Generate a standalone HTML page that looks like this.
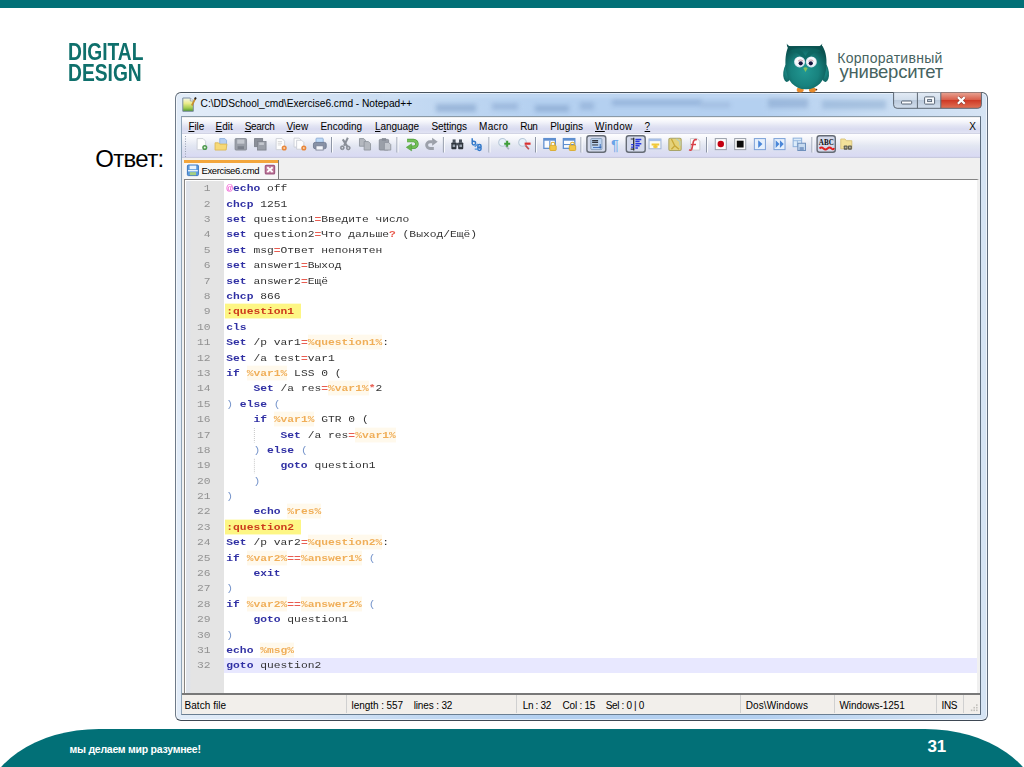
<!DOCTYPE html>
<html lang="ru">
<head>
<meta charset="utf-8">
<title>Ответ</title>
<style>
html,body{margin:0;padding:0;}
body{width:1024px;height:767px;position:relative;overflow:hidden;background:#fff;font-family:"Liberation Sans",sans-serif;}
.abs{position:absolute;}
#topbar{left:0;top:0;width:1024px;height:7.8px;background:#027077;}
#footer{left:-16px;top:728.5px;width:1056px;height:90px;background:#027077;border-radius:115px 115px 0 0 / 80px 80px 0 0;}
#slogan{left:69.5px;top:742.4px;color:#fff;font-weight:bold;font-size:10.5px;line-height:14px;white-space:nowrap;letter-spacing:-.25px;}
#pageno{left:927.6px;top:737px;color:#fff;font-weight:bold;font-size:17px;line-height:20px;letter-spacing:-.2px;}
#answer{left:95.3px;top:145.8px;font-size:24px;line-height:26px;color:#000;letter-spacing:-.7px;}
#dd,#dd2{color:#0f706c;font-weight:bold;font-size:24.2px;line-height:22px;white-space:nowrap;transform-origin:0 0;}
#corp1{left:837.2px;top:48.6px;font-size:14px;line-height:18px;color:#46635f;white-space:nowrap;letter-spacing:.3px;}
#corp2{left:839.6px;top:59.8px;font-size:18.5px;line-height:24px;color:#46635f;white-space:nowrap;letter-spacing:-.24px;}
/* window */
#win{left:175.2px;top:91.7px;width:812.8px;height:629.1px;box-sizing:border-box;border:1.4px solid #6e7a88;border-top-color:#4a545e;border-bottom-color:#3e4854;border-right-color:#5e6a7a;border-radius:6px;background:linear-gradient(90deg,#e2ecf8 0,#dbe7f6 14%,#c3d9f2 30%,#b4d0f0 45%,#b4d0f0 72%,#c6dbf2 86%,#d6e4f4 100%);box-shadow:inset 0 0 0 1px rgba(255,255,255,.6);}
#title{left:200.6px;top:97.4px;font-size:10.2px;line-height:14px;color:#000;white-space:nowrap;letter-spacing:-.035px;}
#client{left:181px;top:116.2px;width:800px;height:598.6px;background:#f0f0f0;box-sizing:border-box;border:1.3px solid #8fa4b8;border-top-color:#8a9aa8;border-right-color:#5c6c7e;border-bottom-color:#6a7e92;}
#menubar{left:182.3px;top:117.5px;width:797.4px;height:16px;background:linear-gradient(#ffffff 0,#f3f4fa 25%,#e2e4f3 50%,#d9dbf0 70%,#e1e3f3 92%,#c9cbdc 100%);}
.mi{position:absolute;top:119.5px;font-size:10px;line-height:14px;color:#000;white-space:nowrap;}
.mi u{text-decoration:underline;}
#toolbar{left:182.3px;top:133.5px;width:797.4px;height:24.8px;background:linear-gradient(#fefeff 0,#f4f5fa 22%,#e3e7f2 48%,#dcdff1 70%,#d9daf3 93%,#c2c4d6 100%);}
#tabbar{left:182.3px;top:158.3px;width:797.4px;height:21.7px;background:#f0f0f0;}
#tab{left:184px;top:160px;width:94.5px;height:19.3px;background:#f7f7f7;border-right:1.3px solid #7a7a7a;box-sizing:border-box;}
#tabtop{left:184px;top:159.8px;width:94px;height:3.5px;background:#f3a63c;}
#tabtxt{left:201.5px;top:164.2px;font-size:9.5px;line-height:13px;color:#000;white-space:nowrap;letter-spacing:-0.36px;}
#editor{left:184.2px;top:179.2px;width:795px;height:514px;background:#fff;border:1.5px solid #858585;border-left:1.8px solid #878482;border-right:2.5px solid #f0f0f0;border-bottom:0;box-sizing:border-box;}
#margin{left:186px;top:180.7px;width:38px;height:512px;background:linear-gradient(90deg,#dfe3ea 0,#dfe3ea 3.5px,#e4e4e4 5px);}
#curline{left:224px;top:658.3px;width:752.7px;height:14.5px;background:#e8e8ff;}
.ln{position:absolute;left:185px;width:25.5px;text-align:right;font-family:"Liberation Mono",monospace;font-size:11.3px;line-height:15.39px;height:15.39px;color:#929292;transform:scaleY(.87);transform-origin:0 10.7px;}
.cl{position:absolute;left:226.3px;font-family:"Liberation Mono",monospace;font-size:11.3px;line-height:15.39px;height:15.39px;color:#333;white-space:pre;transform:scaleY(.87);transform-origin:0 10.7px;}
.k{color:#3030a4;font-weight:bold;}
.v{color:#f0ae58;font-weight:bold;background:#fff9ec;padding:2.6px 0 1.9px;}
.o{color:#e85c50;font-weight:bold;}
.h{color:#f060d4;font-weight:bold;}
.p{color:#7896cc;}
.lb{color:#cc3a1c;font-weight:bold;background:#fdf684;padding:2.6px 0 1.9px 1.4px;margin-left:-1.4px;}
#status{left:182.3px;top:692.6px;width:797.4px;height:21px;background:#f2efeb;border-top:2px solid #787878;box-sizing:border-box;}
.st{position:absolute;top:698.5px;font-size:10px;line-height:14px;color:#000;white-space:nowrap;}
.sd{position:absolute;top:695px;width:1px;height:18px;background:#d0d0d0;}
</style>
</head>
<body>
<div id="topbar" class="abs"></div>
<div id="dd" class="abs" style="left:68px;top:40.9px;transform:scaleX(.795)">DIGITAL</div>
<div id="dd2" class="abs" style="left:68px;top:61.5px;transform:scaleX(.795)">DESIGN</div>
<div id="corp1" class="abs">Корпоративный</div>
<div id="corp2" class="abs">университет</div>
<div id="answer" class="abs">Ответ:</div>

<div id="win" class="abs"></div>
<div id="title" class="abs">C:\DDSchool_cmd\Exercise6.cmd - Notepad++</div>
<div id="client" class="abs"></div>
<div id="menubar" class="abs"></div>
<div id="toolbar" class="abs"></div>
<div id="tabbar" class="abs"></div>
<div id="tab" class="abs"></div>
<div id="tabtop" class="abs"></div>
<div id="tabtxt" class="abs">Exercise6.cmd</div>
<div id="editor" class="abs"></div>
<div id="margin" class="abs"></div>
<div id="curline" class="abs"></div>
<div class="ln" style="top:181.30px">1</div><div class="cl" style="top:181.30px"><span class="h">@</span><span class="k">echo</span> off</div>
<div class="ln" style="top:196.69px">2</div><div class="cl" style="top:196.69px"><span class="k">chcp</span> 1251</div>
<div class="ln" style="top:212.08px">3</div><div class="cl" style="top:212.08px"><span class="k">set</span> question1<span class="o">=</span>Введите число</div>
<div class="ln" style="top:227.47px">4</div><div class="cl" style="top:227.47px"><span class="k">set</span> question2<span class="o">=</span>Что дальше<span class="o">?</span> (Выход/Ещё)</div>
<div class="ln" style="top:242.86px">5</div><div class="cl" style="top:242.86px"><span class="k">set</span> msg<span class="o">=</span>Ответ непонятен</div>
<div class="ln" style="top:258.25px">6</div><div class="cl" style="top:258.25px"><span class="k">set</span> answer1<span class="o">=</span>Выход</div>
<div class="ln" style="top:273.64px">7</div><div class="cl" style="top:273.64px"><span class="k">set</span> answer2<span class="o">=</span>Ещё</div>
<div class="ln" style="top:289.03px">8</div><div class="cl" style="top:289.03px"><span class="k">chcp</span> 866</div>
<div class="ln" style="top:304.42px">9</div><div class="cl" style="top:304.42px"><span class="lb">:question1 </span></div>
<div class="ln" style="top:319.81px">10</div><div class="cl" style="top:319.81px"><span class="k">cls</span></div>
<div class="ln" style="top:335.20px">11</div><div class="cl" style="top:335.20px"><span class="k">Set</span> /p var1<span class="o">=</span><span class="v">%question1%</span>:</div>
<div class="ln" style="top:350.59px">12</div><div class="cl" style="top:350.59px"><span class="k">Set</span> /a test<span class="o">=</span>var1</div>
<div class="ln" style="top:365.98px">13</div><div class="cl" style="top:365.98px"><span class="k">if</span> <span class="v">%var1%</span> LSS 0 (</div>
<div class="ln" style="top:381.37px">14</div><div class="cl" style="top:381.37px">    <span class="k">Set</span> /a res<span class="o">=</span><span class="v">%var1%</span><span class="o">*</span>2</div>
<div class="ln" style="top:396.76px">15</div><div class="cl" style="top:396.76px"><span class="p">)</span> <span class="k">else</span> <span class="p">(</span></div>
<div class="ln" style="top:412.15px">16</div><div class="cl" style="top:412.15px">    <span class="k">if</span> <span class="v">%var1%</span> GTR 0 (</div>
<div class="ln" style="top:427.54px">17</div><div class="cl" style="top:427.54px">        <span class="k">Set</span> /a res<span class="o">=</span><span class="v">%var1%</span></div>
<div class="ln" style="top:442.93px">18</div><div class="cl" style="top:442.93px">    <span class="p">)</span> <span class="k">else</span> <span class="p">(</span></div>
<div class="ln" style="top:458.32px">19</div><div class="cl" style="top:458.32px">        <span class="k">goto</span> question1</div>
<div class="ln" style="top:473.71px">20</div><div class="cl" style="top:473.71px">    <span class="p">)</span></div>
<div class="ln" style="top:489.10px">21</div><div class="cl" style="top:489.10px"><span class="p">)</span></div>
<div class="ln" style="top:504.49px">22</div><div class="cl" style="top:504.49px">    <span class="k">echo</span> <span class="v">%res%</span></div>
<div class="ln" style="top:519.88px">23</div><div class="cl" style="top:519.88px"><span class="lb">:question2 </span></div>
<div class="ln" style="top:535.27px">24</div><div class="cl" style="top:535.27px"><span class="k">Set</span> /p var2<span class="o">=</span><span class="v">%question2%</span>:</div>
<div class="ln" style="top:550.66px">25</div><div class="cl" style="top:550.66px"><span class="k">if</span> <span class="v">%var2%</span><span class="o">==</span><span class="v">%answer1%</span> <span class="p">(</span></div>
<div class="ln" style="top:566.05px">26</div><div class="cl" style="top:566.05px">    <span class="k">exit</span></div>
<div class="ln" style="top:581.44px">27</div><div class="cl" style="top:581.44px"><span class="p">)</span></div>
<div class="ln" style="top:596.83px">28</div><div class="cl" style="top:596.83px"><span class="k">if</span> <span class="v">%var2%</span><span class="o">==</span><span class="v">%answer2%</span> <span class="p">(</span></div>
<div class="ln" style="top:612.22px">29</div><div class="cl" style="top:612.22px">    <span class="k">goto</span> question1</div>
<div class="ln" style="top:627.61px">30</div><div class="cl" style="top:627.61px"><span class="p">)</span></div>
<div class="ln" style="top:643.00px">31</div><div class="cl" style="top:643.00px"><span class="k">echo</span> <span class="v">%msg%</span></div>
<div class="ln" style="top:658.39px">32</div><div class="cl" style="top:658.39px"><span class="k">goto</span> question2</div>
<div class="mi" style="left:188.4px;letter-spacing:-0.106px"><u>F</u>ile</div>
<div class="mi" style="left:215.5px;letter-spacing:0.016px"><u>E</u>dit</div>
<div class="mi" style="left:244.7px;letter-spacing:-0.331px"><u>S</u>earch</div>
<div class="mi" style="left:286.6px;letter-spacing:0.025px"><u>V</u>iew</div>
<div class="mi" style="left:320.4px;letter-spacing:0.012px">Encoding</div>
<div class="mi" style="left:375.0px;letter-spacing:-0.062px"><u>L</u>anguage</div>
<div class="mi" style="left:431.4px;letter-spacing:-0.068px">Se<u>t</u>tings</div>
<div class="mi" style="left:479.1px;letter-spacing:0.221px">Macro</div>
<div class="mi" style="left:520.3px;letter-spacing:-0.386px">Run</div>
<div class="mi" style="left:550.2px;letter-spacing:0.000px">Plugins</div>
<div class="mi" style="left:595.0px;letter-spacing:0.354px"><u>W</u>indow</div>
<div class="mi" style="left:644.6px;letter-spacing:0.000px"><u>?</u></div>
<div class="mi" style="left:969.2px;letter-spacing:-0.200px">X</div>
<div id="status" class="abs"></div>
<div class="st" style="left:184.5px;letter-spacing:0.056px">Batch file</div>
<div class="st" style="left:351.6px;letter-spacing:-0.064px">length : 557</div>
<div class="st" style="left:413.7px;letter-spacing:-0.143px">lines : 32</div>
<div class="st" style="left:522.7px;letter-spacing:-0.328px">Ln : 32</div>
<div class="st" style="left:562.6px;letter-spacing:-0.246px">Col : 15</div>
<div class="st" style="left:605.8px;letter-spacing:-0.353px">Sel : 0 | 0</div>
<div class="st" style="left:745.7px;letter-spacing:0.114px">Dos\Windows</div>
<div class="st" style="left:839.4px;letter-spacing:-0.063px">Windows-1251</div>
<div class="st" style="left:941.4px;letter-spacing:-0.291px">INS</div>
<div class="sd" style="left:346px"></div>
<div class="sd" style="left:516px"></div>
<div class="sd" style="left:740px"></div>
<div class="sd" style="left:834px"></div>
<div class="sd" style="left:936px"></div>
<div class="sd" style="left:963px"></div>
<svg class="abs" style="left:0;top:0" width="1024" height="767" viewBox="0 0 1024 767">
<rect x="586.9" y="135.700" width="18.9" height="16.600" rx="2.500" fill="#d3d9ea" stroke="#666c76" stroke-width="1.400"/>
<rect x="626.3" y="135.700" width="18.9" height="16.600" rx="2.500" fill="#d3d9ea" stroke="#666c76" stroke-width="1.400"/>
<rect x="817.1" y="135.700" width="18.2" height="16.600" rx="2.500" fill="#d3d9ea" stroke="#666c76" stroke-width="1.400"/>
<path d="M331.5,137v15.500" stroke="#8e96a6" stroke-width="1"/><path d="M332.5,137v15.500" stroke="#fbfcfe" stroke-width="1"/>
<path d="M397.0,137v15.500" stroke="#8e96a6" stroke-width="1"/><path d="M398.0,137v15.500" stroke="#fbfcfe" stroke-width="1"/>
<path d="M443.4,137v15.500" stroke="#8e96a6" stroke-width="1"/><path d="M444.4,137v15.500" stroke="#fbfcfe" stroke-width="1"/>
<path d="M489.0,137v15.500" stroke="#8e96a6" stroke-width="1"/><path d="M490.0,137v15.500" stroke="#fbfcfe" stroke-width="1"/>
<path d="M535.5,137v15.500" stroke="#8e96a6" stroke-width="1"/><path d="M536.5,137v15.500" stroke="#fbfcfe" stroke-width="1"/>
<path d="M581.0,137v15.500" stroke="#8e96a6" stroke-width="1"/><path d="M582.0,137v15.500" stroke="#fbfcfe" stroke-width="1"/>
<path d="M706.5,137v15.500" stroke="#8e96a6" stroke-width="1"/><path d="M707.5,137v15.500" stroke="#fbfcfe" stroke-width="1"/>
<path d="M812.0,137v15.500" stroke="#8e96a6" stroke-width="1"/><path d="M813.0,137v15.500" stroke="#fbfcfe" stroke-width="1"/>
<g transform="translate(195.0,137.3) scale(0.850)"><path d="M2.5,1.5h7l3,3v10h-10z" fill="#fdfdfd" stroke="#c9ccd3" stroke-width="1"/><circle cx="11.5" cy="12" r="3" fill="#4f9a4f"/><circle cx="11.5" cy="12" r="1.2" fill="#e8f5e4"/></g>
<g transform="translate(214.2,137.3) scale(0.850)"><path d="M6.5,1.5h6l2,2v7h-8z" fill="#b7d0f2" stroke="#8fb0de"/><path d="M1,6.5h4l1.5,1.5h8.5l-1,7h-13z" fill="#f6d978" stroke="#dcb650"/></g>
<g transform="translate(233.8,137.3) scale(0.850)"><rect x="1.5" y="1.5" width="13.5" height="13.5" rx="1" fill="#9a9fa8" stroke="#858a94"/><rect x="4" y="2.5" width="8.5" height="5" fill="#c4c8cf"/><rect x="4.5" y="10.5" width="7.5" height="3.5" fill="#7c818b"/></g>
<g transform="translate(253.3,137.3) scale(0.850)"><rect x="1.5" y="1.5" width="9.5" height="9.5" fill="#8a8f98" stroke="#7a7f88"/><rect x="5" y="5" width="10" height="10" fill="#9a9fa8" stroke="#7f848d"/><rect x="7" y="6" width="5.5" height="3" fill="#c4c8cf"/></g>
<g transform="translate(274.0,137.3) scale(0.850)"><path d="M2.5,1.5h7l3,3v10h-10z" fill="#fdfdfd" stroke="#c9ccd3" stroke-width="1"/><path d="M4.5,5h5M4.5,7h5M4.5,9h4" stroke="#c8c8c8" stroke-width=".8"/><circle cx="12" cy="12.5" r="3" fill="#e9873a"/><circle cx="12" cy="12.5" r="1.2" fill="#f8d2b0"/></g>
<g transform="translate(293.2,137.3) scale(0.850)"><path d="M1,1h6l2.5,2.500v8h-8.500z" fill="#fdfdfd" stroke="#c9ccd3"/><path d="M4,3.500h6l2.500,2.500v8h-8.500z" fill="#fdfdfd" stroke="#c9ccd3"/><circle cx="12.500" cy="12.500" r="3" fill="#e9873a"/><circle cx="12.500" cy="12.500" r="1.200" fill="#f8d2b0"/></g>
<g transform="translate(312.6,137.3) scale(0.850)"><rect x="4" y="1" width="8.5" height="6" rx="1" fill="#bcdaf8" stroke="#8aa8d0"/><rect x="1" y="6" width="15" height="7.500" rx="2" fill="#8892a6" stroke="#6c768c"/><rect x="4" y="10" width="8.500" height="5" fill="#f4f6fa" stroke="#7a8294"/></g>
<g transform="translate(338.5,137.3) scale(0.850)"><path d="M11,0.500L6.500,10M5,2.500l5.500,8.500" stroke="#8a8f98" stroke-width="2.400" fill="none"/><circle cx="4.500" cy="12.300" r="2.300" fill="#8a8f98" stroke="#8a8f98" stroke-width="1"/><circle cx="11.500" cy="12.500" r="2.300" fill="#8a8f98" stroke="#8a8f98" stroke-width="1"/><circle cx="4.500" cy="12.300" r=".9" fill="#e4e6f0"/><circle cx="11.500" cy="12.500" r=".9" fill="#e4e6f0"/></g>
<g transform="translate(358.2,137.3) scale(0.850)"><path d="M1.500,1.500h5l2,2v7h-7z" fill="#b4b8bf" stroke="#8e939c"/><path d="M7,5h5l2.500,2.500v7.500h-7.500z" fill="#b4b8bf" stroke="#8e939c"/></g>
<g transform="translate(378.0,137.3) scale(0.850)"><rect x="1.500" y="2.500" width="11" height="12.500" rx="1" fill="#9a9fa8" stroke="#858a94"/><rect x="4.500" y="1" width="5" height="3" fill="#858a94"/><path d="M7.500,6h5l2.500,2.500v6.500h-7.500z" fill="#c2c6cd" stroke="#8e939c"/></g>
<g transform="translate(405.0,137.3) scale(0.850)"><path d="M2.500,3.800h7.500a4,4 0 0 1 0,8h-4" fill="none" stroke="#4c9a3c" stroke-width="4.200"/><path d="M2.500,3.800h7.500a4,4 0 0 1 0,8h-4" fill="none" stroke="#74c058" stroke-width="2.600"/><path d="M7.800,7.600v8.400l-6.300,-4.200z" fill="#66b44c" stroke="#4c9a3c" stroke-width=".6"/></g>
<g transform="translate(424.5,137.3) scale(0.850)"><path d="M11,13.200h-4.500a4,4 0 0 1 0,-8h3" fill="none" stroke="#9ca1aa" stroke-width="3.400"/><path d="M9,0.600v9.200l6.500,-4.600z" fill="#9ca1aa"/></g>
<g transform="translate(450.5,137.3) scale(0.850)"><rect x="1" y="6" width="6" height="8" rx="1" fill="#2e343c"/><rect x="9" y="6" width="6" height="8" rx="1" fill="#2e343c"/><rect x="2.500" y="2.500" width="3.500" height="4" fill="#4a525c"/><rect x="10" y="2.500" width="3.500" height="4" fill="#4a525c"/><rect x="6.500" y="6.500" width="3" height="3" fill="#4a525c"/><rect x="2.500" y="8.500" width="3" height="3" fill="#9aa4b0"/><rect x="10.500" y="8.500" width="3" height="3" fill="#9aa4b0"/></g>
<g transform="translate(470.5,137.3) scale(0.850)"><path d="M2,1v7M2,5.500a2.200,2.200 0 1 1 0,2.500" fill="none" stroke="#2f76c8" stroke-width="1.700"/><circle cx="10.500" cy="10.500" r="2" fill="none" stroke="#2f76c8" stroke-width="1.700"/><circle cx="10.500" cy="13.500" r="2" fill="none" stroke="#2f76c8" stroke-width="1.700"/><path d="M5,11l3.500,-3M5,14h4" stroke="#4a90dc" stroke-width="1.500"/></g>
<g transform="translate(497.4,137.3) scale(0.850)"><circle cx="6" cy="6" r="4.500" fill="#e8f2fa" stroke="#b8c8d8" stroke-width="1.200"/><path d="M9.500,9.500l4,4.500" stroke="#a9b4c0" stroke-width="2"/><path d="M8,7.500h7M11.500,4v7" stroke="#3e9e3a" stroke-width="2.400"/></g>
<g transform="translate(517.4,137.3) scale(0.850)"><circle cx="6" cy="6" r="4.500" fill="#e8f2fa" stroke="#b8c8d8" stroke-width="1.200"/><path d="M9.500,9.500l4,4.500" stroke="#c05050" stroke-width="2"/><path d="M8.500,7.500h7" stroke="#dc3030" stroke-width="2.600"/></g>
<g transform="translate(543.0,137.3) scale(0.850)"><rect x="1" y="1.500" width="13.500" height="11.500" fill="#fafcff" stroke="#5f8fd0" stroke-width="1.500"/><rect x="1" y="1.500" width="13.500" height="2.500" fill="#5f8fd0"/><path d="M8,4v9" stroke="#5f8fd0" stroke-width="1.300"/><rect x="8" y="9.500" width="7.500" height="6" rx="1" fill="#f3c744" stroke="#d8a626"/><path d="M9.500,9.500v-1.500a2.200,2.200 0 0 1 4.400,0v1.500" fill="none" stroke="#e0b030" stroke-width="1.300"/></g>
<g transform="translate(562.5,137.3) scale(0.850)"><rect x="1" y="1.500" width="13.500" height="11.500" fill="#fafcff" stroke="#5f8fd0" stroke-width="1.500"/><rect x="1" y="1.500" width="13.500" height="2.500" fill="#5f8fd0"/><path d="M1,8.500h13.500" stroke="#5f8fd0" stroke-width="1.300"/><rect x="8" y="9.500" width="7.500" height="6" rx="1" fill="#f3c744" stroke="#d8a626"/><path d="M9.500,9.500v-1.500a2.200,2.200 0 0 1 4.400,0v1.500" fill="none" stroke="#e0b030" stroke-width="1.300"/></g>
<g transform="translate(589.6,137.3) scale(0.850)"><rect x="1.500" y="1.500" width="13" height="13" rx="1" fill="#bcd4f0" stroke="#7f96b4"/><path d="M3,4h7M3,6h7" stroke="#30343c" stroke-width="1.400"/><path d="M3,9h7" stroke="#30343c" stroke-width="1.200"/><path d="M4,12h8.500v-4" stroke="#4a78c0" stroke-width="1.300" fill="none"/><path d="M10.500,11l2,2.500l2,-2.500z" fill="#3a68b0"/></g>
<g transform="translate(629.0,137.3) scale(0.850)"><path d="M5.500,0.500v15" stroke="#30343c" stroke-width="1.600"/><path d="M2,2h4M2,14h4" stroke="#30343c" stroke-width="1.400"/><path d="M7.500,2.500h7M7.500,5h5M7.500,7.500h7M7.500,10h5M7.500,12.500h3" stroke="#2838e0" stroke-width="1.800"/><path d="M2.500,8.500h3M2.500,11.500h3" stroke="#2838e0" stroke-width="1.500"/></g>
<g transform="translate(648.2,137.3) scale(0.850)"><rect x="1" y="2" width="14" height="11.500" fill="#fbfbf4" stroke="#9fb4d4" stroke-width="1.200"/><rect x="1" y="2" width="14" height="2.500" fill="#a8c0e8"/><path d="M4,8.500h9M6,11h5M8.500,8v5" stroke="#f0c838" stroke-width="2.400"/></g>
<g transform="translate(668.0,137.3) scale(0.850)"><rect x="1" y="1" width="14.500" height="14.500" rx="1.500" fill="#e4d27a" stroke="#a8a468" stroke-width="1.200"/><path d="M4,2l4,8l5,4M8,10l-4,4" stroke="#c8a838" stroke-width="1.500" fill="none"/><path d="M10,2l4,3v5" stroke="#b4d0c0" stroke-width="1.500" fill="none"/></g>
<g transform="translate(687.5,137.3) scale(0.850)"><path d="M3.500,1.500h8l3,3v10.500h-11z" fill="#fcfcfc" stroke="#c4c4c8"/><path d="M11,3c-3,-1 -4,1 -4.500,4l-1.500,7c-.5,1.500 -2,1.500 -3,.5" fill="none" stroke="#d84048" stroke-width="1.900"/><path d="M4,8.500h6" stroke="#d84048" stroke-width="1.700"/></g>
<g transform="translate(714.0,137.3) scale(0.850)"><rect x="1.500" y="1.500" width="13" height="13" fill="#fdfdfd" stroke="#9aa0aa" stroke-width="1.200"/><circle cx="8" cy="8" r="3.800" fill="#c40010"/></g>
<g transform="translate(733.4,137.3) scale(0.850)"><rect x="1.500" y="1.500" width="13" height="13" fill="#fdfdfd" stroke="#9aa0aa" stroke-width="1.200"/><rect x="4" y="4" width="8" height="8" fill="#0a0a0a"/></g>
<g transform="translate(753.1,137.3) scale(0.850)"><rect x="1.500" y="1.500" width="13" height="13" fill="#e6f0fc" stroke="#7ea2d8" stroke-width="1.200"/><path d="M6,3.500v9l5,-4.500z" fill="#4a86d8"/></g>
<g transform="translate(772.7,137.3) scale(0.850)"><rect x="1.500" y="1.500" width="13" height="13" fill="#e6f0fc" stroke="#7ea2d8" stroke-width="1.200"/><path d="M3.500,3.500v9l4.500,-4.500zM8.500,3.500v9l4.500,-4.500z" fill="#4a86d8"/></g>
<g transform="translate(792.3,137.3) scale(0.850)"><rect x="1" y="1" width="10" height="10" fill="#dcecfa" stroke="#8fb2dc" stroke-width="1.200"/><path d="M1,4h10M6,4v7" stroke="#8fb2dc"/><rect x="6.500" y="7" width="9" height="8.500" fill="#c6daf0" stroke="#6e8fbc" stroke-width="1.200"/><rect x="8.500" y="11.500" width="5" height="3.500" fill="#7e9cc8"/></g>
<g transform="translate(839.5,137.3) scale(0.850)"><path d="M1.500,2h5l1.500,2h6.500v9.500h-13z" fill="#f3e29a" stroke="#d8c274"/><rect x="5" y="9.500" width="4.500" height="5" rx="1" fill="#5a5a50"/><rect x="10" y="9.500" width="4.500" height="5" rx="1" fill="#5a5a50"/><rect x="6.200" y="11" width="2" height="2" fill="#b8b8a8"/><rect x="11.200" y="11" width="2" height="2" fill="#b8b8a8"/></g>
<text x="611" y="150.200" font-family="Liberation Sans, sans-serif" font-size="14.500" fill="#6aa4e8">¶</text>
<text x="818.800" y="145" font-family="Liberation Serif, serif" font-weight="bold" font-size="8.200" fill="#101010" textLength="15" lengthAdjust="spacingAndGlyphs">ABC</text>
<path d="M819.500,148.500q2,-2 4,0t4,0t4,0t2.500,-.5" stroke="#e02020" stroke-width="1.800" fill="none"/>
<path d="M185.500,136v21" stroke="#9aa2b4" stroke-width="1" stroke-dasharray="1,1.500"/>
</svg><svg class="abs" style="left:0;top:0" width="1024" height="767" viewBox="0 0 1024 767">
<defs>
<linearGradient id="gClose" x1="0" y1="0" x2="0" y2="1"><stop offset="0" stop-color="#e9a898"/><stop offset=".45" stop-color="#d9604c"/><stop offset=".5" stop-color="#cf3a26"/><stop offset="1" stop-color="#e2785a"/></linearGradient>
<linearGradient id="gBtn" x1="0" y1="0" x2="0" y2="1"><stop offset="0" stop-color="#e4ecf6"/><stop offset=".45" stop-color="#d2deec"/><stop offset=".5" stop-color="#bccbdd"/><stop offset="1" stop-color="#d3dfee"/></linearGradient>
<linearGradient id="gIco" x1="0" y1="0" x2="0" y2="1"><stop offset="0" stop-color="#f6f7ec"/><stop offset=".4" stop-color="#ecec8c"/><stop offset=".75" stop-color="#a4cc50"/><stop offset="1" stop-color="#4c962e"/></linearGradient>
<clipPath id="cBtn"><path d="M893.600,92.500h87.800v12.300a3.500,3.500 0 0 1 -3.500,3.500h-80.800a3.500,3.500 0 0 1 -3.500,-3.500z"/></clipPath>
<filter id="bl"><feGaussianBlur stdDeviation="3"/></filter>
<clipPath id="cTitle"><rect x="176.600" y="93.100" width="810" height="23.100"/></clipPath>
<filter id="bl2" x="-20%" y="-100%" width="140%" height="300%"><feGaussianBlur stdDeviation="2.200"/></filter>
</defs>
<g clip-path="url(#cTitle)"><g filter="url(#bl2)" opacity=".55">
<rect x="436" y="104" width="40" height="8" fill="#7f9fc8"/>
<rect x="492" y="103" width="26" height="7" fill="#8aa8d0"/>
<rect x="535" y="105" width="34" height="7" fill="#7f9fc8"/>
<rect x="580" y="102" width="14" height="8" fill="#8aa8d0"/>
<rect x="612" y="99" width="90" height="7" fill="#86a6d0"/>
<rect x="700" y="102" width="30" height="6" fill="#9ab4d8"/>
<rect x="768" y="98" width="40" height="10" fill="#86a4cc"/>
<rect x="822" y="100" width="64" height="9" fill="#8fadd2"/>
<rect x="380" y="94" width="520" height="3" fill="#dce9f8"/>
</g></g>
<!-- control buttons -->
<g clip-path="url(#cBtn)">
<rect x="893" y="92" width="48" height="17" fill="url(#gBtn)"/>
<rect x="940.800" y="92" width="41" height="17" fill="url(#gClose)"/>
</g>
<path d="M893.600,92.500v12.300a3.500,3.500 0 0 0 3.500,3.500h80.800a3.500,3.500 0 0 0 3.500,-3.500v-12.300" fill="none" stroke="#5c6672" stroke-width="1"/>
<path d="M917.400,92.500v15.800M940.800,92.500v15.800" stroke="#5c6672" stroke-width="1"/>
<rect x="901.500" y="101" width="10.200" height="3" rx=".8" fill="#fafcff" stroke="#5a6676" stroke-width="1"/>
<rect x="924.600" y="96.900" width="10" height="7.200" rx=".8" fill="#fafcff" stroke="#5a6676" stroke-width="1"/>
<rect x="927.600" y="99.600" width="4" height="2" fill="#c5d2e2" stroke="#5a6676" stroke-width=".9"/>
<path d="M957.900,97.100l6.800,6.600M964.700,97.100l-6.800,6.600" stroke="#8a3a30" stroke-width="3.400" stroke-linecap="butt"/>
<path d="M957.900,97.100l6.800,6.600M964.700,97.100l-6.800,6.600" stroke="#ffffff" stroke-width="2.200" stroke-linecap="butt"/>
<!-- app icon -->
<path d="M182.800,98h7.500l3,3v10.300h-10.500z" fill="url(#gIco)" stroke="#7a8ca0" stroke-width="1"/>
<path d="M190.300,98v3h3" fill="#f4f4f0" stroke="#8a98a8" stroke-width=".7"/>
<path d="M195.600,98l-3.800,7.500" stroke="#c89030" stroke-width="1.700"/>
<path d="M195.900,97.500l-1,1.900" stroke="#202028" stroke-width="1.800"/>
<!-- tab icon (save) -->
<rect x="187.400" y="165" width="11" height="10.600" rx="1" fill="#5b9be0" stroke="#3f78c0" stroke-width="1"/>
<rect x="189.600" y="165.600" width="6.600" height="3.600" fill="#e8f2fc"/>
<rect x="188" y="170" width="9.800" height="1.400" fill="#e8f2fc"/>
<rect x="189.800" y="172.200" width="6.200" height="3" fill="#a6d080"/>
<!-- tab close -->
<rect x="265.300" y="165.300" width="9.300" height="8.600" rx="1" fill="#c07a9c" stroke="#a05a80" stroke-width="1.200"/>
<path d="M267.300,167.200l5.300,4.900M272.600,167.200l-5.300,4.900" stroke="#ffffff" stroke-width="1.900"/>
<!-- size grip -->
<g fill="#c2c0bc"><rect x="976" y="709.500" width="1.600" height="1.600"/><rect x="973.400" y="709.500" width="1.600" height="1.600"/><rect x="970.800" y="709.500" width="1.600" height="1.600"/><rect x="976" y="706.900" width="1.600" height="1.600"/><rect x="973.400" y="706.900" width="1.600" height="1.600"/><rect x="976" y="704.300" width="1.600" height="1.600"/></g>
<!-- indent guides -->
<path d="M254.400,428v14.500M254.400,458.800v14.500" stroke="#c8c8c8" stroke-width="1" stroke-dasharray="1,1"/>
</svg>
<svg class="abs" style="left:0;top:0" width="1024" height="767" viewBox="0 0 1024 767">
<defs>
<radialGradient id="gOwl" cx=".47" cy=".58" r=".62"><stop offset="0" stop-color="#229893"/><stop offset=".55" stop-color="#18827e"/><stop offset="1" stop-color="#0a5250"/></radialGradient>
<radialGradient id="gWing" cx=".5" cy=".4" r=".7"><stop offset="0" stop-color="#239a95"/><stop offset="1" stop-color="#0c5c5a"/></radialGradient>
</defs>
<!-- feet -->
<ellipse cx="800.200" cy="90" rx="3.500" ry="2.400" fill="#e88a2c"/>
<ellipse cx="812.400" cy="90" rx="3.500" ry="2.400" fill="#e88a2c"/>
<circle cx="816.400" cy="89.600" r=".9" fill="#5a2a10"/>
<!-- wings -->
<ellipse cx="787.600" cy="72.500" rx="4.300" ry="9.500" fill="url(#gWing)" transform="rotate(6 787.600 72.500)"/>
<ellipse cx="824.600" cy="72.500" rx="4.300" ry="9.500" fill="url(#gWing)" transform="rotate(-6 824.600 72.500)"/>
<!-- body -->
<path d="M788.500,46.300Q805.500,45.600 822.500,46.300C826.300,51.500 827.300,61 826,70C824.800,80 818,89.300 806,89.300C794,89.300 787.200,80 786,70C784.700,61 785.700,51.500 788.500,46.300Z" fill="url(#gOwl)"/>
<!-- ear tufts -->
<path d="M786.900,43.600c.4,1.600 1.700,2.400 3.900,2.700l-2.300,2.200c-1.300,-1.400 -1.900,-3 -1.600,-4.900z" fill="#0a5250"/>
<path d="M822.100,43.600c-.4,1.600 -1.700,2.400 -3.900,2.700l2.300,2.200c1.300,-1.400 1.900,-3 1.600,-4.900z" fill="#0a5250"/>
<path d="M788.500,46.300Q805.500,45.600 822.500,46.300l.8,1.600q-17.800,-1.300 -35.600,0z" fill="#0a5250"/>
<!-- brow shading -->
<path d="M789.500,51.500c5,-4 12,-3 16,4.500c4,-7.500 11,-8.500 16,-4.500c-5,-.5 -11,2 -16,10c-5,-8 -11,-10.500 -16,-10z" fill="#0d6662" opacity=".85"/>
<!-- eyes -->
<circle cx="799.600" cy="61.900" r="5.500" fill="#d9e4f0"/>
<circle cx="811.300" cy="61.900" r="5.500" fill="#d9e4f0"/>
<circle cx="799.400" cy="61.600" r="4.500" fill="#f8fafd"/>
<circle cx="811.500" cy="61.600" r="4.500" fill="#f8fafd"/>
<circle cx="800.700" cy="63.300" r="2.100" fill="#15153e"/>
<circle cx="810.800" cy="63.300" r="2.100" fill="#15153e"/>
<path d="M798,61.300a3,2.600 0 0 1 5.200,0" stroke="#b86a7c" stroke-width=".7" fill="none"/>
<path d="M808.300,61.300a3,2.600 0 0 1 5.200,0" stroke="#b86a7c" stroke-width=".7" fill="none"/>
<!-- beak -->
<path d="M803.300,67.900q2.200,-1.300 4.400,0l-2.200,4.200z" fill="#86c45c"/>
</svg>


<div id="footer" class="abs"></div>
<div id="slogan" class="abs">мы делаем мир разумнее!</div>
<div id="pageno" class="abs">31</div>
</body>
</html>
